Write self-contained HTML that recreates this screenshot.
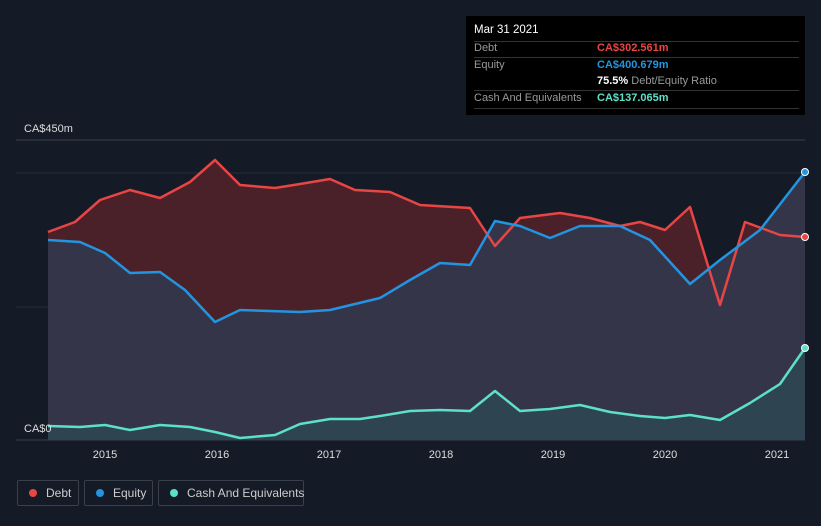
<!DOCTYPE html><html><head><style>
body{margin:0;background:#151b26;width:821px;height:526px;overflow:hidden;font-family:"Liberation Sans",sans-serif;position:relative}
.tt{position:absolute;left:466px;top:16px;width:339px;height:99px;background:#000;color:#999;font-size:11px}
.tt .r{position:absolute;left:8px;right:6px;border-top:1px solid #333}
.l{position:absolute;top:480px;height:26px;border:1px solid #3a404a;border-radius:2px;color:#ccc;font-size:12px;line-height:24px;padding:0 0 0 28px;box-sizing:border-box;white-space:nowrap}
.l i{position:absolute;left:11px;top:8px;width:8px;height:8px;border-radius:50%}
</style></head><body>
<svg width="821" height="526" style="position:absolute;left:0;top:0">
<line x1="16" y1="140" x2="805" y2="140" stroke="#3a404a"/>
<line x1="16" y1="173" x2="805" y2="173" stroke="#262c38"/>
<line x1="16" y1="307" x2="805" y2="307" stroke="#262c38"/>
<path d="M48,232 L75,222 100,200 130,190 160,198 190,182 215,160 240,185 275,188 300,184 330,179 355,190 390,192 420,205 470,208 495,246 520,218 560,213 590,218 620,226 640,222 665,230 690,207 720,305 745,222 780,235 805,237 L805,172 760,230 720,260 690,284 670,262 650,240 620,226 580,226 550,238 520,226 495,221 470,265 440,263 410,280 380,298 330,310 300,312 240,310 215,322 185,290 160,272 130,273 105,253 80,242 48,240Z" fill="#4a2129"/>
<path d="M48,240 L80,242 105,253 130,273 160,272 185,290 215,322 240,310 300,312 330,310 380,298 410,280 440,263 470,265 495,221 520,226 550,238 580,226 620,226 650,240 670,262 690,284 720,260 760,230 805,172 L805,440 48,440Z" fill="#35354a"/>
<path d="M48,426 L80,427 105,425 130,430 160,425 190,427 215,432 240,438 275,435 300,424 330,419 360,419 380,416 410,411 440,410 470,411 495,391 520,411 550,409 580,405 610,412 640,416 665,418 690,415 720,420 750,403 780,384 805,348 L805,440 48,440Z" fill="#2e4450"/>
<polyline fill="none" stroke="#e84545" stroke-width="2.5" stroke-linejoin="round" points="48,232 75,222 100,200 130,190 160,198 190,182 215,160 240,185 275,188 300,184 330,179 355,190 390,192 420,205 470,208 495,246 520,218 560,213 590,218 620,226 640,222 665,230 690,207 720,305 745,222 780,235 805,237"/>
<polyline fill="none" stroke="#2394e0" stroke-width="2.5" stroke-linejoin="round" points="48,240 80,242 105,253 130,273 160,272 185,290 215,322 240,310 300,312 330,310 380,298 410,280 440,263 470,265 495,221 520,226 550,238 580,226 620,226 650,240 670,262 690,284 720,260 760,230 805,172"/>
<polyline fill="none" stroke="#5de0c8" stroke-width="2.5" stroke-linejoin="round" points="48,426 80,427 105,425 130,430 160,425 190,427 215,432 240,438 275,435 300,424 330,419 360,419 380,416 410,411 440,410 470,411 495,391 520,411 550,409 580,405 610,412 640,416 665,418 690,415 720,420 750,403 780,384 805,348"/>
<line x1="16" y1="440" x2="805" y2="440" stroke="#3a404a"/>
<circle cx="805" cy="237" r="3.5" fill="#e84545" stroke="#fff"/>
<circle cx="805" cy="172" r="3.5" fill="#2394e0" stroke="#fff"/>
<circle cx="805" cy="348" r="3.5" fill="#5de0c8" stroke="#fff"/>
<g fill="#ddd" font-size="11" font-family="Liberation Sans" text-anchor="middle">
<text x="105" y="458">2015</text><text x="217" y="458">2016</text><text x="329" y="458">2017</text><text x="441" y="458">2018</text><text x="553" y="458">2019</text><text x="665" y="458">2020</text><text x="777" y="458">2021</text></g>
<text x="24" y="132" fill="#ddd" font-size="11">CA$450m</text>
<text x="24" y="432" fill="#ddd" font-size="11">CA$0</text>
</svg>
<div class="tt">
<div style="position:absolute;left:8px;top:8px;color:#fff;font-size:11.5px">Mar 31 2021</div>
<div class="r" style="top:25px"></div>
<div style="position:absolute;left:8px;top:26px">Debt</div><div style="position:absolute;left:131px;top:26px;color:#e84545;font-weight:bold">CA$302.561m</div>
<div class="r" style="top:41px"></div>
<div style="position:absolute;left:8px;top:43px">Equity</div><div style="position:absolute;left:131px;top:43px;color:#2394e0;font-weight:bold">CA$400.679m</div>
<div style="position:absolute;left:131px;top:59px"><b style="color:#fff">75.5%</b> Debt/Equity Ratio</div>
<div class="r" style="top:74px"></div>
<div style="position:absolute;left:8px;top:76px">Cash And Equivalents</div><div style="position:absolute;left:131px;top:76px;color:#5de0c8;font-weight:bold">CA$137.065m</div>
<div class="r" style="top:92px"></div>
</div>
<div class="l" style="left:17px;width:62px"><i style="background:#e84545"></i>Debt</div>
<div class="l" style="left:84px;width:69px"><i style="background:#2394e0"></i>Equity</div>
<div class="l" style="left:158px;width:146px"><i style="background:#5de0c8"></i>Cash And Equivalents</div>
</body></html>
